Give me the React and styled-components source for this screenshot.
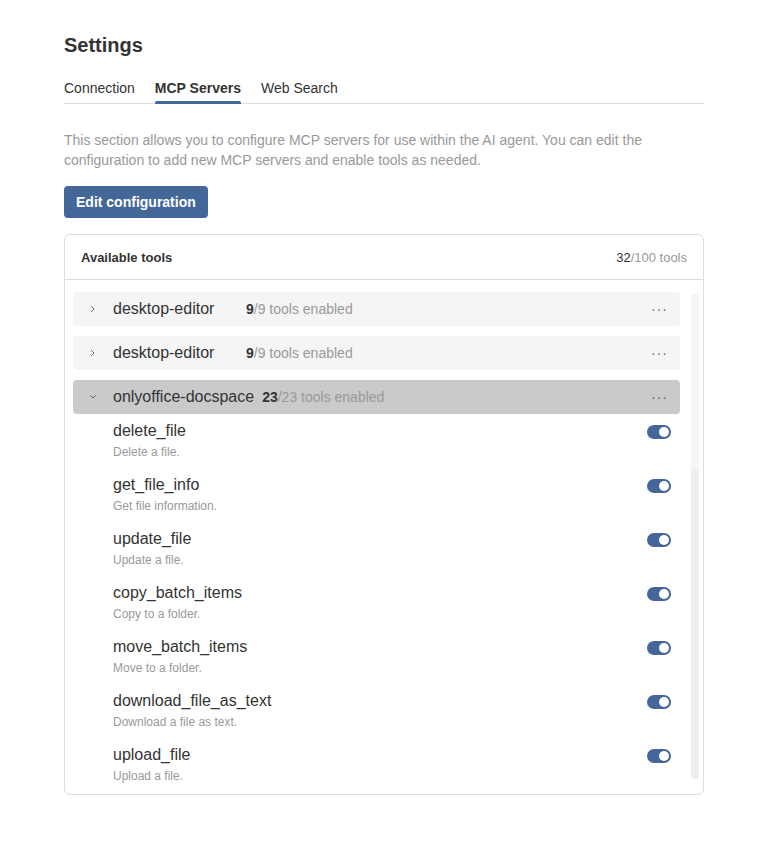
import styled, { createGlobalStyle } from "styled-components";
import { useState } from "react";

const GlobalStyle = createGlobalStyle`
  body {
    margin: 0;
    background: #fff;
    font-family: "Liberation Sans", Arial, sans-serif;
    color: #333;
  }
`;

const servers = [
  { name: "desktop-editor", enabled: 9, total: 9, open: false },
  { name: "desktop-editor", enabled: 9, total: 9, open: false },
  { name: "onlyoffice-docspace", enabled: 23, total: 23, open: true },
];

const docspaceTools = [
  ["delete_file", "Delete a file."],
  ["get_file_info", "Get file information."],
  ["update_file", "Update a file."],
  ["copy_batch_items", "Copy to a folder."],
  ["move_batch_items", "Move to a folder."],
  ["download_file_as_text", "Download a file as text."],
  ["upload_file", "Upload a file."],
  ["create_folder", "Create a new folder."],
  ["get_folder_info", "Get folder information."],
  ["get_folder_content", "Get folder content."],
  ["rename_folder", "Rename a folder."],
  ["delete_folder", "Delete a folder."],
  ["get_my_folder", "Get the My documents folder."],
  ["create_room", "Create a new room."],
  ["get_room_info", "Get room information."],
  ["update_room", "Update a room."],
  ["archive_room", "Archive a room."],
  ["set_room_security", "Invite or remove users."],
  ["get_room_security_info", "Get room access rights."],
  ["get_rooms_folder", "Get the Rooms folder."],
  ["get_room_types", "Get a list of room types."],
  ["get_room_access_levels", "Get room access levels."],
  ["get_all_people", "Get all users."],
];

const Toggle = ({ on }) => (
  <ToggleTrack $on={on}>
    <ToggleKnob $on={on} />
  </ToggleTrack>
);

const ChevronIcon = ({ open }) => (
  <ChevronBox $open={open}>
    <svg width="8" height="8" viewBox="0 0 8 8">
      <polyline
        points="2.5,1.5 5,4 2.5,6.5"
        fill="none"
        stroke="#666"
        strokeWidth="1"
        strokeLinecap="round"
        strokeLinejoin="round"
      />
    </svg>
  </ChevronBox>
);

const App = () => {
  const [tab] = useState("MCP Servers");

  return (
    <>
      <GlobalStyle />
      <Page>
        <Title>Settings</Title>
        <Tabs>
          {["Connection", "MCP Servers", "Web Search"].map((t) => (
            <Tab key={t} $active={t === tab}>
              {t}
            </Tab>
          ))}
        </Tabs>

        <Description>
          This section allows you to configure MCP servers for use within the AI
          agent. You can edit the configuration to add new MCP servers and
          enable tools as needed.
        </Description>

        <EditButton>Edit configuration</EditButton>

        <Panel>
          <PanelHeader>
            <PanelTitle>Available tools</PanelTitle>
            <Counter>
              <b>32</b>/100 tools
            </Counter>
          </PanelHeader>
          <PanelBody>
            <List>
              {servers.map((s, i) => (
                <ServerGroup key={i}>
                  <ServerRow $open={s.open}>
                    <ChevronIcon open={s.open} />
                    <ServerName>{s.name}</ServerName>
                    <Counter $big>
                      <b>{s.enabled}</b>/{s.total} tools enabled
                    </Counter>
                    <Dots>···</Dots>
                  </ServerRow>
                  {s.open &&
                    docspaceTools.map(([name, desc]) => (
                      <ToolItem key={name}>
                        <div>
                          <ToolName>{name}</ToolName>
                          <ToolDesc>{desc}</ToolDesc>
                        </div>
                        <Toggle on />
                      </ToolItem>
                    ))}
                </ServerGroup>
              ))}
            </List>
            <ScrollTrack>
              <ScrollThumb />
            </ScrollTrack>
          </PanelBody>
        </Panel>
      </Page>
    </>
  );
};

export default App;

const Page = styled.div`
  width: 640px;
  padding: 33px 0 52px 64px;
  display: flex;
  flex-direction: column;
  align-items: flex-start;
`;

const Title = styled.h1`
  margin: 0 0 23px;
  font-size: 20px;
  font-weight: 700;
  line-height: 24px;
  color: #333;
`;

const Tabs = styled.div`
  align-self: stretch;
  display: flex;
  gap: 20px;
  border-bottom: 1px solid #ddd;
`;

const Tab = styled.div`
  position: relative;
  padding: 0 0 7px;
  font-size: 14px;
  line-height: 16px;
  font-weight: ${({ $active }) => ($active ? 700 : 400)};
  color: #333;
  cursor: pointer;

  &::after {
    content: "";
    position: absolute;
    left: 0;
    right: 0;
    bottom: -1px;
    height: 3px;
    border-radius: 2px 2px 0 0;
    background: ${({ $active }) => ($active ? "#44679a" : "transparent")};
  }
`;

const Description = styled.p`
  margin: 26px 0 16px;
  font-size: 14px;
  line-height: 20px;
  color: #999;
`;

const EditButton = styled.button`
  height: 32px;
  padding: 0 12px;
  border: none;
  border-radius: 4px;
  background: #44679a;
  color: #fff;
  font-family: inherit;
  font-size: 14px;
  font-weight: 700;
  cursor: pointer;
`;

const Panel = styled.div`
  align-self: stretch;
  margin-top: 16px;
  border: 1px solid #ddd;
  border-radius: 6px;
  overflow: hidden;
`;

const PanelHeader = styled.div`
  height: 44px;
  padding: 0 16px;
  display: flex;
  align-items: center;
  justify-content: space-between;
  border-bottom: 1px solid #ddd;
`;

const PanelTitle = styled.div`
  font-size: 13px;
  font-weight: 700;
  color: #333;
`;

const Counter = styled.div`
  font-size: ${({ $big }) => ($big ? "14px" : "13px")};
  color: #999;

  b {
    color: #333;
    font-weight: ${({ $big }) => ($big ? 700 : 400)};
  }
`;

const PanelBody = styled.div`
  height: 514px;
  display: flex;
`;

const List = styled.div`
  flex: 1;
  padding: 12px 11px 0 8px;
  overflow-y: auto;
  scrollbar-width: none;

  &::-webkit-scrollbar {
    display: none;
  }
`;

const ScrollTrack = styled.div`
  width: 8px;
  margin: 14px 4px 15px 0;
  border-radius: 3px;
  background: #eee;
  overflow: hidden;
`;

const ScrollThumb = styled.div`
  height: 175px;
  background: #f6f6f6;
`;

const ServerGroup = styled.div`
  margin-bottom: 10px;
`;

const ServerRow = styled.div`
  height: 34px;
  padding: 0 12px 0 16px;
  display: flex;
  align-items: center;
  border-radius: 4px;
  background: ${({ $open }) => ($open ? "#cacaca" : "#f5f5f5")};
`;

const ChevronBox = styled.span`
  width: 24px;
  height: 8px;
  display: flex;
  align-items: center;

  svg {
    transform: ${({ $open }) => ($open ? "rotate(90deg)" : "none")};
  }
`;

const ServerName = styled.div`
  min-width: 125px;
  margin-right: 8px;
  font-size: 16px;
  color: #333;
`;

const Dots = styled.span`
  margin-left: auto;
  font-size: 14px;
  letter-spacing: 1px;
  color: #666;
`;

const ToolItem = styled.div`
  height: 54px;
  padding: 8px 9px 0 40px;
  box-sizing: border-box;
  display: flex;
  align-items: flex-start;
  justify-content: space-between;
`;

const ToolName = styled.div`
  font-size: 16px;
  line-height: 18px;
  color: #333;
`;

const ToolDesc = styled.div`
  margin-top: 5px;
  font-size: 12px;
  line-height: 14px;
  color: #999;
`;

const ToggleTrack = styled.div`
  width: 24px;
  height: 14px;
  margin-top: 3px;
  border-radius: 7px;
  background: ${({ $on }) => ($on ? "#44679a" : "#ccc")};
  position: relative;
`;

const ToggleKnob = styled.div`
  position: absolute;
  top: 2px;
  left: ${({ $on }) => ($on ? "12px" : "2px")};
  width: 10px;
  height: 10px;
  border-radius: 50%;
  background: #fff;
`;
